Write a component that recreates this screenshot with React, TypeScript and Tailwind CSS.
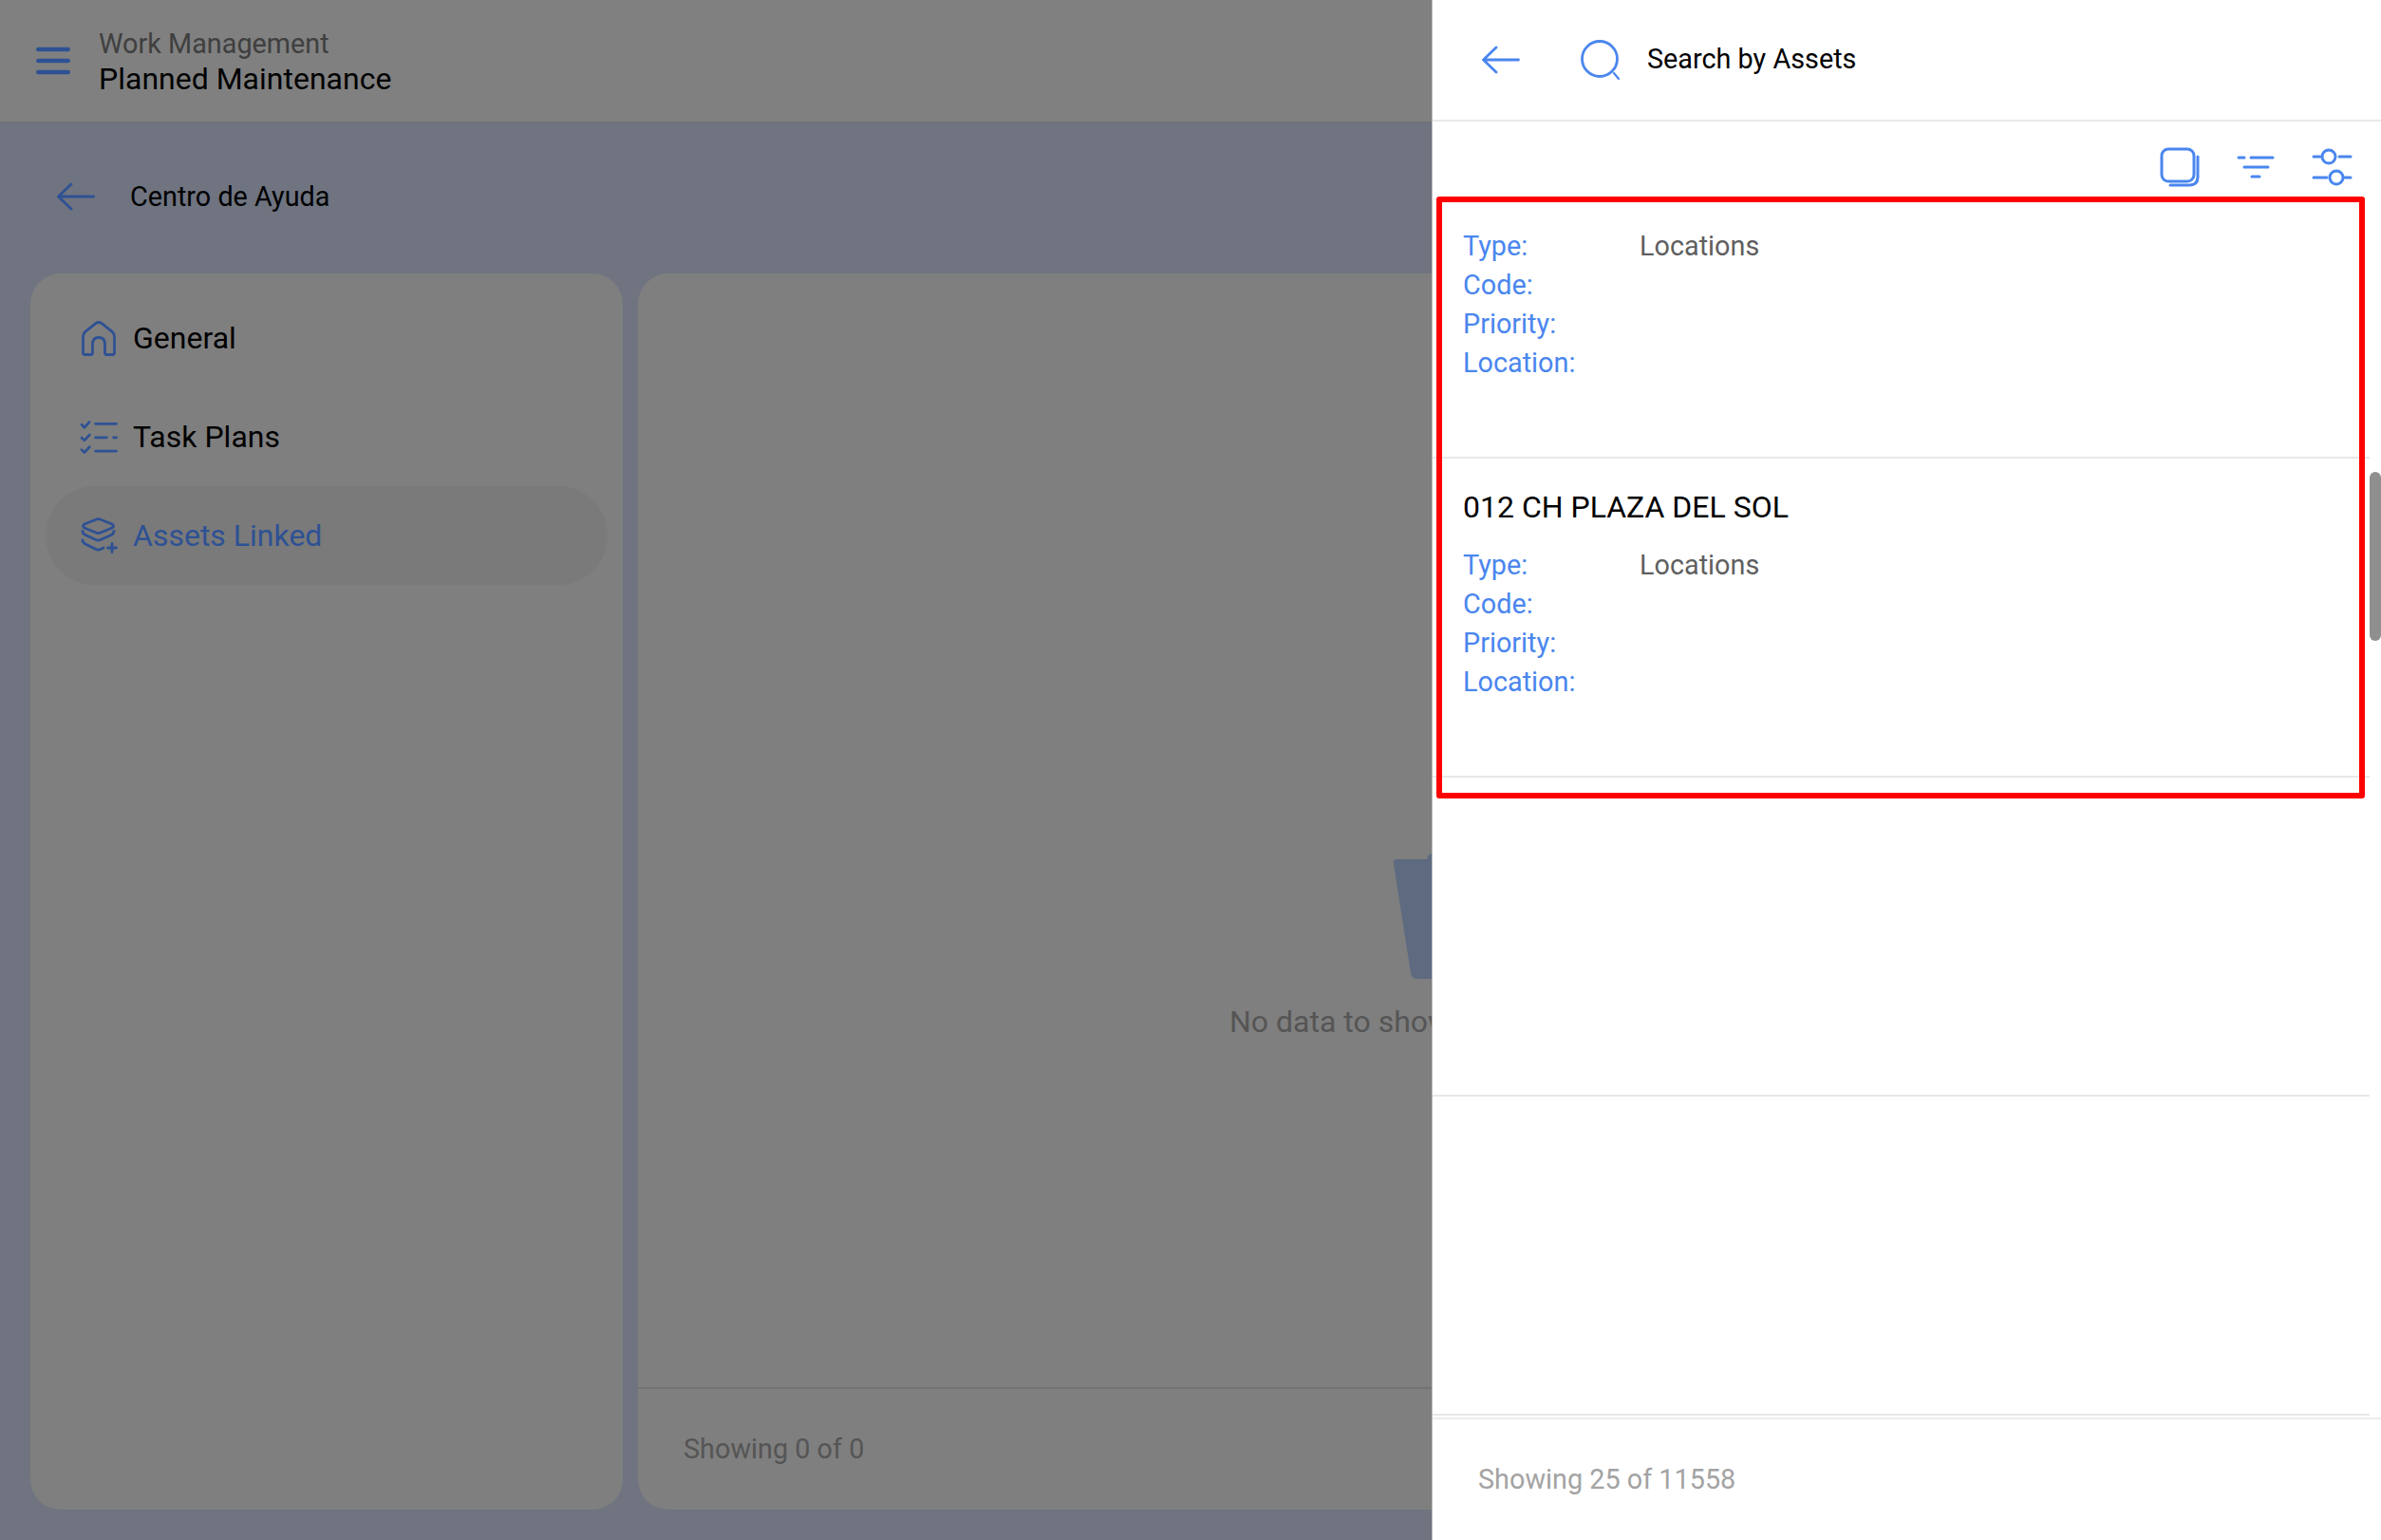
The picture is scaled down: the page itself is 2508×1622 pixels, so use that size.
import React from "react";

const Hamburger = () => (
  <svg width="36" height="30" viewBox="0 0 36 30" fill="none" stroke="#2e5194" strokeWidth="4.6" strokeLinecap="round">
    <path d="M2.3 3H33.7M2.3 15H33.7M2.3 27H33.7" />
  </svg>
);

const BackArrow = ({ color }: { color: string }) => (
  <svg width="40" height="30" viewBox="0 0 40 30" fill="none" stroke={color} strokeWidth="2.8" strokeLinecap="round" strokeLinejoin="round">
    <path d="M38.5 15H2M15 2L1.5 15L15 28" />
  </svg>
);

const HomeIcon = () => (
  <svg width="36" height="37" viewBox="0 0 36 37" fill="none" stroke="#2e5194" strokeWidth="2.8" strokeLinejoin="round">
    <path d="M1.5 33.5V16.5Q1.5 13.5 3.8 11.4L14.8 2.6Q18 .4 21.2 2.6L32.2 11.4Q34.5 13.5 34.5 16.5V33.5Q34.5 35.5 32.5 35.5H26Q24.5 35.5 24.5 33.5V24.5Q24.5 17.5 18 17.5Q11.5 17.5 11.5 24.5V33.5Q11.5 35.5 10 35.5H3.5Q1.5 35.5 1.5 33.5Z" />
  </svg>
);

const TaskIcon = () => (
  <svg width="41" height="38" viewBox="0 0 41 38" fill="none" stroke="#2e5194" strokeWidth="2.8" strokeLinecap="round" strokeLinejoin="round">
    <path d="M2 6L5 9L10.5 3M2 20L5 23L10.5 17M2 33L5 36L10.5 30" />
    <path d="M17 5H39.5M17 20H29M36.5 20H39.5M17 34.5H39.5" />
  </svg>
);

const LayersIcon = () => (
  <svg width="39" height="38" viewBox="0 0 39 38" fill="none" stroke="#2e5194" strokeWidth="2.8" strokeLinecap="round" strokeLinejoin="round">
    <path d="M16 2.2Q18.5 1.2 21 2.2L33 7Q36 9 33 11L21 16Q18.5 17 16 16L4 11Q1 9 4 7Z" />
    <path d="M2 14.5Q2 17 5 18.5L16 23.5Q18.5 24.5 21 23.5L32 18.5Q35 17 35 14.5" />
    <path d="M2 24Q2 26.5 5 28L16 33.5Q18.5 34.8 21 33.5L24 32" />
    <path d="M33 27.5V36.5M28.5 32H37.5" />
  </svg>
);

const SearchIcon = () => (
  <svg width="42" height="42" viewBox="0 0 42 42" fill="none" stroke="#4a86ee" strokeWidth="2.8" strokeLinecap="round">
    <circle cx="20" cy="20" r="18.5" />
    <path d="M35 35L40 41" strokeWidth="2.2" />
  </svg>
);

const CopyIcon = () => (
  <svg width="42" height="42" viewBox="0 0 42 42" fill="none" stroke="#4a86ee" strokeWidth="3" strokeLinecap="round">
    <rect x="2" y="2" width="34" height="34" rx="7" />
    <path d="M40 10V31Q40 40 31 40H11" />
  </svg>
);

const FilterIcon = () => (
  <svg width="40" height="24" viewBox="0 0 40 24" fill="none" stroke="#4a86ee" strokeWidth="3" strokeLinecap="round">
    <path d="M2 2H8M15 2H38M8 12H33M16 22H24" />
  </svg>
);

const SliderIcon = () => (
  <svg width="43" height="40" viewBox="0 0 43 40" fill="none" stroke="#4a86ee" strokeWidth="3" strokeLinecap="round">
    <path d="M2 9H9M29 9H41M2 31H16M35 31H41" />
    <circle cx="18" cy="9" r="7" />
    <circle cx="26" cy="31" r="7" />
  </svg>
);

const TrashPiece = () => (
  <svg width="100" height="132" viewBox="0 0 100 132" fill="#5e6a80" className="block">
    <path d="M4 6H100V132H26Q20 132 19 126L1 11Q0 6 4 6Z" />
    <path d="M36 7Q37 0 42 0H100V7Z" />
  </svg>
);

function NavItem({ icon, label, active }: { icon: React.ReactNode; label: string; active?: boolean }) {
  return (
    <div className={active ? "flex h-[104px] items-center rounded-[52px] bg-[#7a7a7a]" : "flex h-[104px] items-center"}>
      <div className="ml-[36px] mr-[16px] flex w-[40px] shrink-0 justify-center">{icon}</div>
      <span className={active ? "mt-[-1px] text-[32px] text-[#2e5194]" : "mt-[-1px] text-[32px] text-black"}>{label}</span>
    </div>
  );
}

function Field({ label, value }: { label: string; value?: string }) {
  return (
    <div className="flex h-[41px] items-center text-[28.8px]">
      <span className="w-[186px] text-[#4a86ee]">{label}</span>
      {value ? <span className="text-[#5f5f5f]">{value}</span> : null}
    </div>
  );
}

function Fields() {
  return (
    <div>
      <Field label="Type:" value="Locations" />
      <Field label="Code:" />
      <Field label="Priority:" />
      <Field label="Location:" />
    </div>
  );
}

export default function App() {
  return (
    <div className="flex h-[1622px] w-[2508px] overflow-hidden bg-[#6f7480] font-['Roboto',sans-serif]">
      <div className="flex w-[1508px] shrink-0 flex-col overflow-hidden">
        <header className="flex h-[128px] shrink-0 items-center bg-[#808080] pl-[38px]">
          <Hamburger />
          <div className="ml-[30px] flex flex-col pt-[2px]">
            <span className="text-[28.8px] leading-[34px] text-[#3f3f3f]">Work Management</span>
            <span className="mt-[1px] text-[32px] leading-[38px] text-black">Planned Maintenance</span>
          </div>
        </header>

        <div className="flex h-[160px] shrink-0 items-center pl-[60px] pb-[2px]">
          <BackArrow color="#2e5194" />
          <span className="ml-[37px] mt-[1px] text-[28.8px] text-black">Centro de Ayuda</span>
        </div>

        <div className="flex h-[1302px] shrink-0 gap-[16px] pl-[32px]">
          <aside className="flex w-[624px] shrink-0 flex-col rounded-[32px] bg-[#7f7f7f] px-[16px] pt-[16px]">
            <NavItem icon={<HomeIcon />} label="General" />
            <NavItem icon={<TaskIcon />} label="Task Plans" />
            <NavItem icon={<LayersIcon />} label="Assets Linked" active />
          </aside>

          <main className="flex w-[1804px] shrink-0 flex-col rounded-[32px] bg-[#7f7f7f]">
            <div className="flex-1 pt-[611px]">
              <div className="ml-[795px]">
                <TrashPiece />
              </div>
              <div className="ml-[623px] mt-[23px] whitespace-nowrap text-[32px] leading-[44px] text-[#555555]">
                No data to show
              </div>
            </div>
            <div className="flex h-[129px] shrink-0 items-center border-t-2 border-[#737373] pl-[48px]">
              <span className="text-[28.8px] text-[#555555]">Showing 0 of 0</span>
            </div>
          </main>
        </div>
      </div>

      <section className="relative flex h-[1622px] w-[1000px] shrink-0 flex-col border-l border-[#bdbdbd] bg-white">
        <div className="flex h-[128px] shrink-0 items-center border-b-2 border-[#e8e8e8] pl-[52px]">
          <BackArrow color="#4a86ee" />
          <div className="ml-[64px]">
            <SearchIcon />
          </div>
          <span className="ml-[28px] text-[28.8px] text-black">Search by Assets</span>
        </div>

        <div className="flex h-[80px] shrink-0 items-center justify-end gap-[39px] pr-[30px] pt-[16px]">
          <CopyIcon />
          <FilterIcon />
          <SliderIcon />
        </div>

        <div className="flex-1 overflow-hidden">
          <div className="h-[275px] w-[987px] border-b-2 border-[#e8e8e8] pl-[32px] pt-[31px]">
            <Fields />
          </div>
          <div className="h-[336px] w-[987px] border-b-2 border-[#e8e8e8] pl-[32px] pt-[31px]">
            <div className="mb-[21px] h-[40px] text-[32px] leading-[40px] text-black">012 CH PLAZA DEL SOL</div>
            <Fields />
          </div>
          <div className="h-[336px] w-[987px] border-b-2 border-[#e8e8e8]" />
          <div className="h-[336px] w-[987px] border-b-2 border-[#e8e8e8]" />
        </div>

        <div className="flex h-[129px] shrink-0 items-center border-t-2 border-[#ececec] pl-[48px]">
          <span className="text-[28.8px] text-[#a3a3a3]">Showing 25 of 11558</span>
        </div>

        <div className="absolute right-0 top-[497px] h-[178px] w-[12px] rounded-[6px] bg-[#8f8f8f]" />
        <div className="pointer-events-none absolute left-[4px] top-[207px] h-[634px] w-[978px] rounded-[3px] border-[6px] border-[#ff0000]" />
      </section>
    </div>
  );
}
